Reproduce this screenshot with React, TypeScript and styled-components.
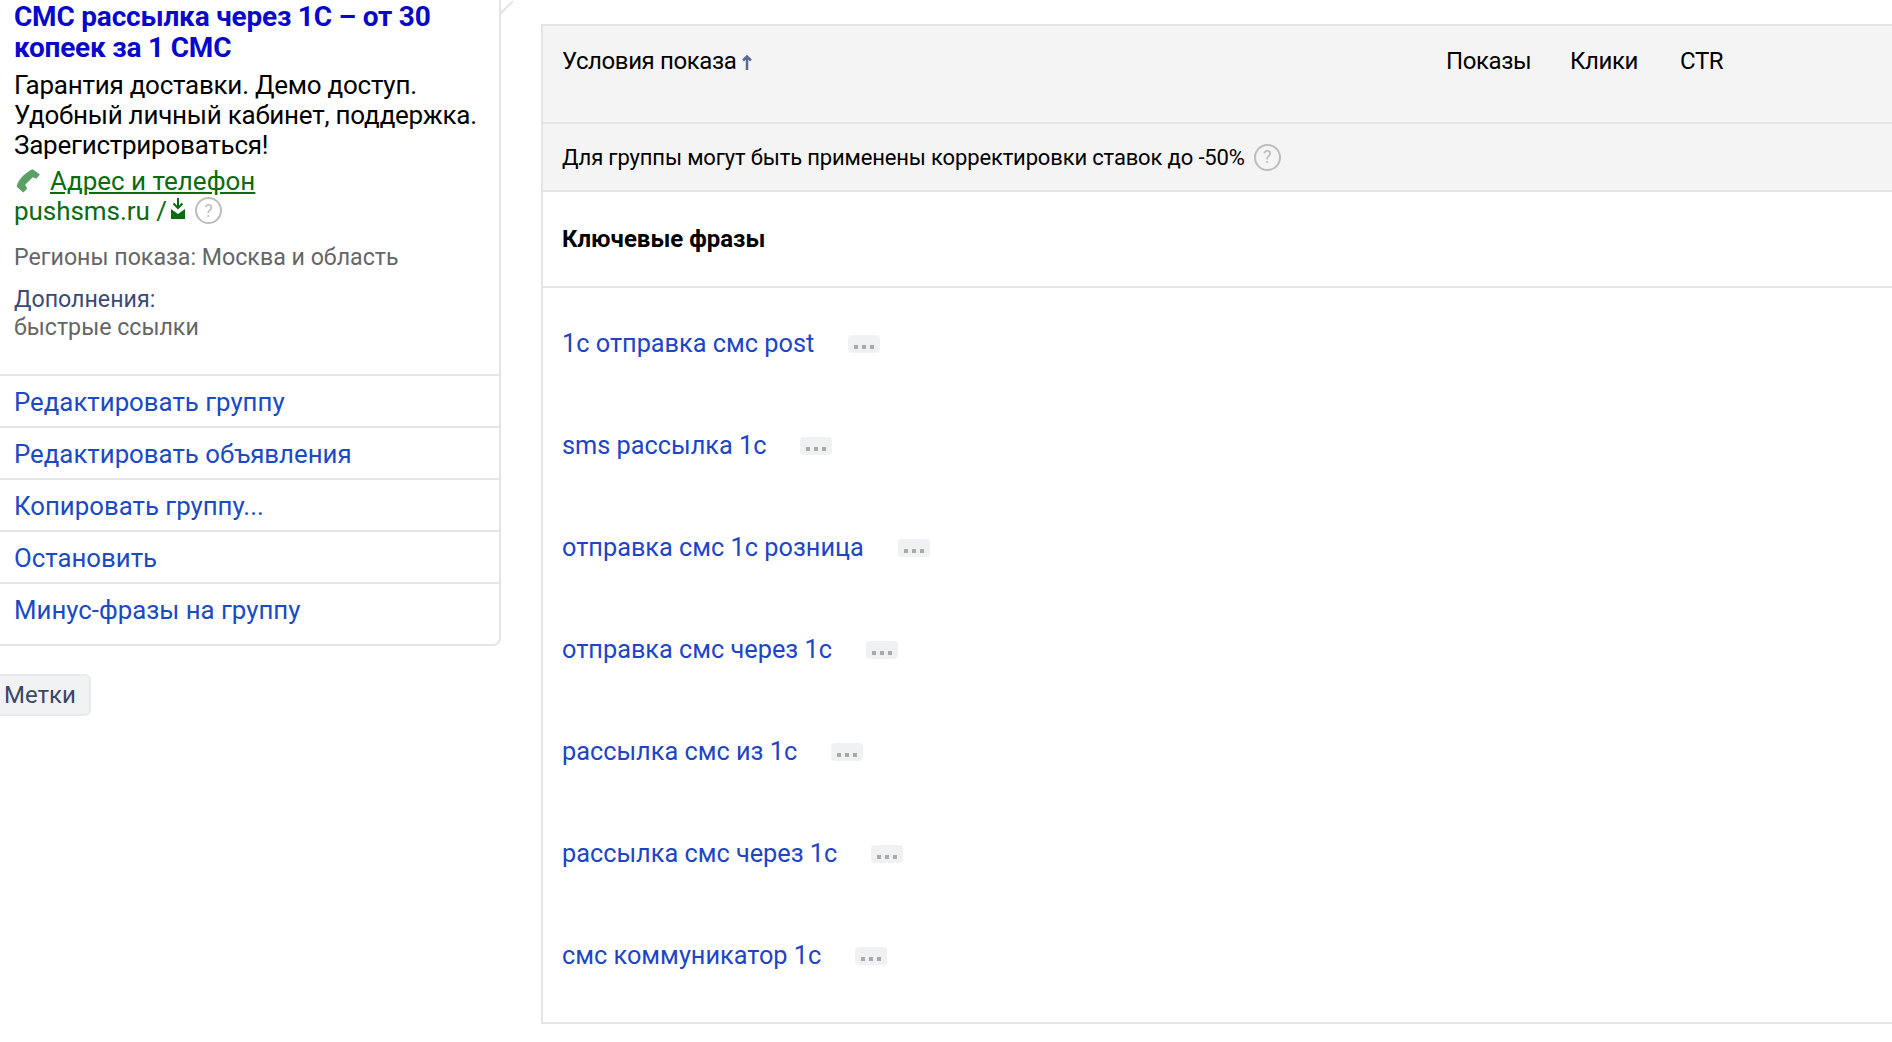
import styled, { createGlobalStyle } from 'styled-components';

const GlobalStyle = createGlobalStyle`
  html, body {
    margin: 0;
    padding: 0;
    background: #fff;
    overflow: hidden;
  }
  body {
    font-family: Roboto, "Noto Sans", sans-serif;
    font-size: 25px;
    color: #000;
  }
`;

const Page = styled.div`
  display: flex;
  width: 1892px;
  height: 1042px;
  overflow: hidden;
`;

const Sidebar = styled.aside`
  flex: 0 0 501px;
  margin-right: 40px;
`;

const AdCard = styled.div`
  position: relative;
  border-right: 2px solid #e5e5e5;
  border-bottom: 2px solid #e5e5e5;
  border-bottom-right-radius: 8px;
  height: 646px;
  box-sizing: border-box;
`;

const CardFold = styled.svg`
  position: absolute;
  top: 0;
  right: -15px;
`;

const AdBody = styled.div`
  padding: 1px 0 0 14px;
  height: 374px;
  box-sizing: border-box;
`;

const AdTitle = styled.a`
  display: block;
  font-size: 28px;
  line-height: 31px;
  font-weight: 700;
  color: #0808cc;
  letter-spacing: -0.2px;
  margin-bottom: 7px;
`;

const AdText = styled.div`
  font-size: 26px;
  line-height: 30px;
  color: #000;
  letter-spacing: -0.25px;
`;

const ContactRow = styled.div`
  display: flex;
  align-items: center;
  gap: 8px;
  margin-top: 6px;
  height: 30px;
`;

const ContactLink = styled.a`
  font-size: 26px;
  line-height: 30px;
  color: #0a6b0f;
  text-decoration: underline;
  text-underline-offset: 2px;
`;

const DomainRow = styled.div`
  display: flex;
  align-items: center;
  height: 29px;
  font-size: 26px;
  letter-spacing: -0.05px;
  color: #0a6b0f;
`;

const VisitGlyph = styled.svg`
  margin: -3px 0 0 3px;
`;

const Muted = styled.div`
  font-size: 23.2px;
  line-height: 28px;
  color: #666;
`;

const RegionLine = styled(Muted)`
  margin-top: 18px;
`;

const ExtrasLabel = styled(Muted)`
  margin-top: 14px;
  color: #3b4a75;
`;

const ActionList = styled.nav`
  display: flex;
  flex-direction: column;
`;

const ActionLink = styled.a`
  display: flex;
  align-items: center;
  height: 52px;
  box-sizing: border-box;
  padding: 2px 0 0 14px;
  border-top: 2px solid #e5e5e5;
  font-size: 25.8px;
  color: #1a4ac4;
`;

const TagsButton = styled.button`
  display: block;
  margin: 28px 0 0 -12px;
  width: 103px;
  height: 42px;
  padding: 0 0 0 14px;
  text-align: left;
  background: #f1f2f4;
  border: 2px solid #e9eaec;
  border-radius: 6px;
  font-family: inherit;
  font-size: 24px;
  color: #3a4866;
`;

const ConditionsPanel = styled.main`
  flex: 1;
  margin-top: 24px;
  height: 1000px;
  box-sizing: border-box;
  border: 2px solid #e5e5e5;
  border-right: none;
`;

const TableHead = styled.div`
  display: grid;
  grid-template-columns: 884px 124px 110px 1fr;
  height: 98px;
  padding: 20px 0 0 19px;
  box-sizing: border-box;
  background: #f4f4f4;
  border-bottom: 2px solid #e5e5e5;
  font-size: 24px;
  line-height: 30px;
  letter-spacing: -0.4px;
`;

const SortArrow = styled.svg`
  margin-left: 6px;
  vertical-align: -1px;
`;

const NoteRow = styled.div`
  display: flex;
  align-items: center;
  height: 68px;
  padding-left: 19px;
  box-sizing: border-box;
  background: #f4f4f4;
  border-bottom: 2px solid #e5e5e5;
  font-size: 22px;
  letter-spacing: -0.15px;
`;

const SectionHead = styled.h2`
  display: flex;
  align-items: center;
  margin: 0;
  height: 96px;
  padding-left: 19px;
  box-sizing: border-box;
  border-bottom: 2px solid #e5e5e5;
  font-size: 24px;
  font-weight: 700;
`;

const PhraseList = styled.div`
  padding-top: 4px;
`;

const PhraseRow = styled.div`
  display: flex;
  align-items: center;
  height: 102px;
  padding-left: 19px;
  gap: 34px;
`;

const PhraseLink = styled.a`
  font-size: 25.3px;
  color: #1d45c6;
`;

const MoreButton = styled.span`
  display: flex;
  align-items: flex-end;
  justify-content: center;
  gap: 4px;
  width: 32px;
  height: 18px;
  padding-bottom: 4px;
  margin-top: 2px;
  box-sizing: border-box;
  background: #f0f1f3;
  border-radius: 4px;
`;

const MoreDot = styled.i`
  width: 4px;
  height: 4px;
  background: #aaa;
`;

const HelpMark = styled.span<{ $left: number }>`
  display: inline-flex;
  align-items: center;
  justify-content: center;
  width: 27px;
  height: 27px;
  margin-left: ${({ $left }) => $left}px;
  box-sizing: border-box;
  border: 2px solid #bdbdbd;
  border-radius: 50%;
  font-size: 18px;
  line-height: 1;
  letter-spacing: 0;
  color: #bdbdbd;
`;

const PhoneIcon = () => (
  <svg width="28" height="28" viewBox="0 0 26 26">
    <path
      d="M17.500 2l6.500 5-3.200 4-3.400-1.500-7 7 1.900 3.400-3.600 3.800-6.200-5.400c.4-3.400 2.700-7 5.800-10 3-2.900 6.200-5.200 9.200-6.300z"
      fill="#5a9f63"
    />
  </svg>
);

const VisitIcon = () => (
  <VisitGlyph width="16" height="22" viewBox="0 0 16 22">
    <path d="M8 0v9M3.500 5.500L8 10l4.500-4.500" fill="none" stroke="#0a6b0f" strokeWidth="2" />
    <path d="M1 11l7 5 7-5v10H1z" fill="#0a6b0f" />
  </VisitGlyph>
);

const actions = [
  'Редактировать группу',
  'Редактировать объявления',
  'Копировать группу...',
  'Остановить',
  'Минус-фразы на группу',
];

const phrases = [
  '1с отправка смс post',
  'sms рассылка 1с',
  'отправка смс 1с розница',
  'отправка смс через 1с',
  'рассылка смс из 1с',
  'рассылка смс через 1с',
  'смс коммуникатор 1с',
];

export default function App() {
  return (
    <Page>
      <GlobalStyle />
      <Sidebar>
        <AdCard>
          <CardFold width="15" height="15" viewBox="0 0 15 15">
            <path d="M1 14L14 1" stroke="#e5e5e5" strokeWidth="2" />
          </CardFold>
          <AdBody>
            <AdTitle>
              СМС рассылка через 1С – от 30
              <br />
              копеек за 1 СМС
            </AdTitle>
            <AdText>
              Гарантия доставки. Демо доступ.
              <br />
              Удобный личный кабинет, поддержка.
              <br />
              Зарегистрироваться!
            </AdText>
            <ContactRow>
              <PhoneIcon />
              <ContactLink>Адрес и телефон</ContactLink>
            </ContactRow>
            <DomainRow>
              pushsms.ru /
              <VisitIcon />
              <HelpMark $left={9}>?</HelpMark>
            </DomainRow>
            <RegionLine>Регионы показа: Москва и область</RegionLine>
            <ExtrasLabel>Дополнения:</ExtrasLabel>
            <Muted>быстрые ссылки</Muted>
          </AdBody>
          <ActionList>
            {actions.map((label) => (
              <ActionLink key={label}>{label}</ActionLink>
            ))}
          </ActionList>
        </AdCard>
        <TagsButton>Метки</TagsButton>
      </Sidebar>

      <ConditionsPanel>
        <TableHead>
          <div>
            Условия показа
            <SortArrow width="10" height="16" viewBox="0 0 10 16">
              <path d="M5 16V2M1 6.500l4-4 4 4" fill="none" stroke="#5a6a96" strokeWidth="2.500" />
            </SortArrow>
          </div>
          <div>Показы</div>
          <div>Клики</div>
          <div>CTR</div>
        </TableHead>
        <NoteRow>
          Для группы могут быть применены корректировки ставок до -50%
          <HelpMark $left={9}>?</HelpMark>
        </NoteRow>
        <SectionHead>Ключевые фразы</SectionHead>
        <PhraseList>
          {phrases.map((phrase) => (
            <PhraseRow key={phrase}>
              <PhraseLink>{phrase}</PhraseLink>
              <MoreButton>
                <MoreDot />
                <MoreDot />
                <MoreDot />
              </MoreButton>
            </PhraseRow>
          ))}
        </PhraseList>
      </ConditionsPanel>
    </Page>
  );
}
